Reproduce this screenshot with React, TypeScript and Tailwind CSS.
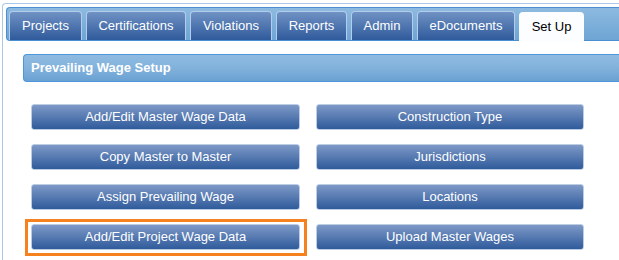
import React from 'react';

const tabs = [
  { label: 'Projects', w: 'w-[73px]' },
  { label: 'Certifications', w: 'w-[100px]' },
  { label: 'Violations', w: 'w-[82px]' },
  { label: 'Reports', w: 'w-[71px]' },
  { label: 'Admin', w: 'w-[62px]' },
  { label: 'eDocuments', w: 'w-[98px]' },
];

const buttons = [
  'Add/Edit Master Wage Data',
  'Construction Type',
  'Copy Master to Master',
  'Jurisdictions',
  'Assign Prevailing Wage',
  'Locations',
  'Add/Edit Project Wage Data',
  'Upload Master Wages',
];

const App: React.FC = () => {
  return (
    <div className="w-[619px] h-[260px] overflow-hidden bg-white pl-[2px] pt-[3px] font-['Liberation_Sans',Arial,sans-serif]">
      <div className="h-full border-l border-t border-[#a9c9e7] rounded-tl-[4px] pl-[3px] pt-[3px]">
        {/* tab strip */}
        <div className="h-[34px] border border-r-0 border-[#4b8fd0] rounded-l-[4px] bg-gradient-to-b from-[#8dbae0] to-[#6ea5d4] pl-[2px] pt-[3px] flex items-start gap-[4px]">
          {tabs.map((t) => (
            <div
              key={t.label}
              className={`${t.w} h-[29px] shrink-0 rounded-t-[4px] border border-b-0 border-[#b3cdea] bg-gradient-to-b from-[#7092c4] to-[#2f5a9b] text-white text-[13px] flex items-center justify-center`}
            >
              {t.label}
            </div>
          ))}
          <div className="w-[65px] h-[30px] mt-[1px] shrink-0 rounded-t-[4px] bg-[#fbfdff] text-black text-[13px] flex items-center justify-center relative z-10">
            Set Up
          </div>
        </div>

        {/* content */}
        <div className="pl-[17px] pt-[13px]">
          <div className="h-[28px] border border-r-0 border-[#4e96da] rounded-l-[4px] bg-gradient-to-b from-[#8fbbe1] via-[#82b2dc] to-[#6aa1d2] pl-[7px] flex items-center text-white font-bold text-[13px]">
            Prevailing Wage Setup
          </div>

          <div className="pl-[8px] pt-[22px] grid grid-cols-[269px_268px] gap-x-[16px] gap-y-[14px]">
            {buttons.map((b, i) => (
              <div
                key={b}
                className="relative h-[26px] rounded-[3px] border border-[#bccde3] bg-gradient-to-b from-[#7e99c7] to-[#2f5b9b] text-white text-[13px] flex items-center justify-center"
              >
                {b}
                {i === 6 && (
                  <span className="absolute -left-[7px] -right-[8px] -top-[6px] -bottom-[7px] border-[3px] border-[#f5821f] pointer-events-none" />
                )}
              </div>
            ))}
          </div>
        </div>
      </div>
    </div>
  );
};

export default App;
